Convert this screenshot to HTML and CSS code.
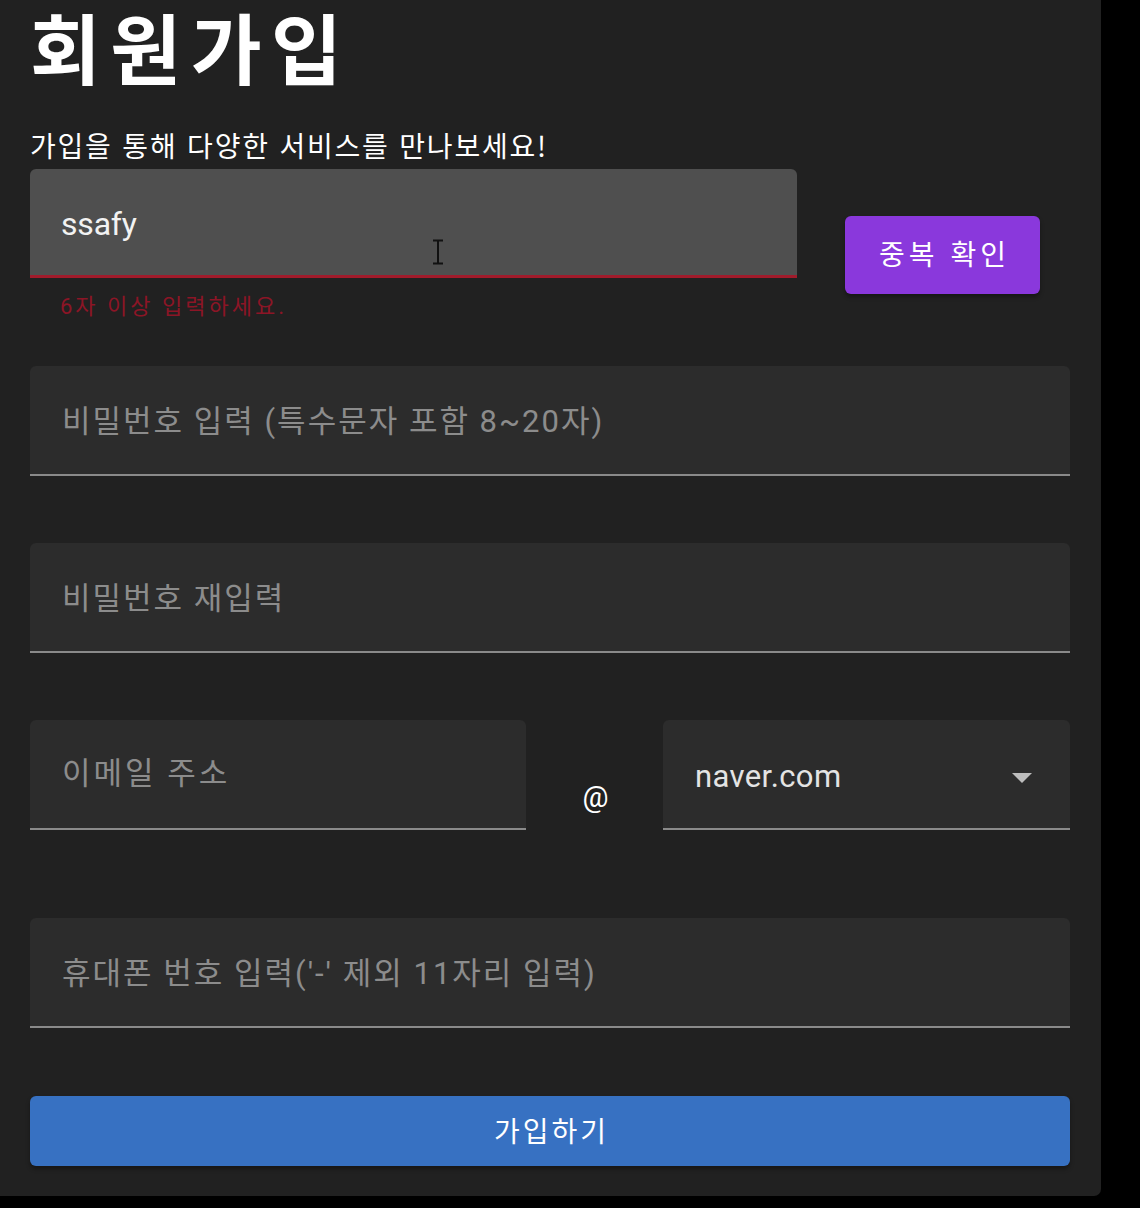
FILE: index.html
```html
<!DOCTYPE html>
<html lang="ko">
<head>
<meta charset="utf-8">
<title>회원가입</title>
<link rel="stylesheet" href="styles.css">
</head>
<body>
<main class="card">
  <h1 class="title">회원가입</h1>
  <p class="subtitle">가입을 통해 다양한 서비스를 만나보세요!</p>

  <div class="row row-id">
    <div class="group group-id">
      <div class="field field-focus field-error">
        <span class="value">ssafy</span>
        <svg class="cursor" width="12" height="26" viewBox="0 0 12 26"><path d="M6 2v22" stroke="#111" stroke-width="2" fill="none"/><path d="M1 1.5h10M1 24.5h10" stroke="#111" stroke-width="2"/></svg>
      </div>
      <div class="details error">6자 이상 입력하세요.</div>
    </div>
    <button class="btn btn-check">중복 확인</button>
  </div>

  <div class="group group-full">
    <div class="field"><span class="placeholder">비밀번호 입력 (특수문자 포함 8~20자)</span></div>
  </div>

  <div class="group group-full">
    <div class="field"><span class="placeholder">비밀번호 재입력</span></div>
  </div>

  <div class="row row-email">
    <div class="group group-email">
      <div class="field"><span class="placeholder placeholder-email">이메일 주소</span></div>
    </div>
    <div class="at">@</div>
    <div class="group group-domain">
      <div class="field field-select">
        <span class="select-value">naver.com</span>
        <svg class="arrow" width="20" height="10" viewBox="0 0 20 10"><path d="M0 0h20L10 10z" fill="#bdbdbd"/></svg>
      </div>
    </div>
  </div>

  <div class="group group-full group-phone">
    <div class="field"><span class="placeholder">휴대폰 번호 입력('-' 제외 11자리 입력)</span></div>
  </div>

  <button class="btn btn-submit">가입하기</button>
</main>
</body>
</html>
```

FILE: styles.css
```css
* { box-sizing: border-box; }

html, body {
  margin: 0;
  padding: 0;
  background: #000;
}

body {
  width: 1140px;
  height: 1208px;
  overflow: hidden;
  font-family: Roboto, "Noto Sans CJK KR", sans-serif;
}

.card {
  width: 1101px;
  height: 1196px;
  background: #212121;
  border-bottom-right-radius: 7px;
  padding: 0 31px 0 30px;
  display: flex;
  flex-direction: column;
}

.title {
  margin: 0;
  height: 98px;
  padding: 0;
  font-family: "Noto Sans CJK KR", sans-serif;
  font-size: 77px;
  line-height: 92px;
  font-weight: 700;
  color: #fff;
  letter-spacing: 9.5px;
}

.subtitle {
  margin: 0;
  height: 71px;
  padding-top: 32px;
  font-family: "Noto Sans CJK KR", sans-serif;
  font-size: 28px;
  line-height: 30px;
  font-weight: 400;
  color: #fff;
  letter-spacing: 1.8px;
}

.row {
  display: flex;
}

.row-id {
  align-items: center;
  margin-bottom: 25px;
}

.group-id {
  width: 767px;
}

.field {
  position: relative;
  height: 110px;
  background: #2c2c2c;
  border-radius: 6px 6px 0 0;
  border-bottom: 2px solid #8a8a8a;
  display: flex;
  align-items: center;
  padding-left: 32px;
  padding-bottom: 4px;
}

.field-focus {
  background: #4f4f4f;
  height: 109px;
  padding-left: 31px;
  padding-bottom: 0;
}

.field-error {
  border-bottom: 3px solid #a11b2b;
}

.value {
  font-family: Roboto, sans-serif;
  font-size: 32px;
  color: #f2f2f2;
  letter-spacing: -0.2px;
  margin-top: 4px;
}

.cursor {
  position: absolute;
  left: 402px;
  top: 70px;
}

.details {
  height: 63px;
  padding: 16px 0 0 30px;
  font-size: 22px;
  line-height: 26px;
}

.error {
  color: #8c1526;
  font-family: Roboto, "Noto Sans CJK KR", sans-serif;
  letter-spacing: 3px;
}

.btn {
  border: none;
  font-family: "Noto Sans CJK KR", sans-serif;
  color: #fff;
  cursor: pointer;
  border-radius: 6px;
  box-shadow: 0 3px 4px rgba(0, 0, 0, 0.35);
}

.btn-check {
  margin-left: 48px;
  width: 195px;
  height: 78px;
  background: #8a38dc;
  font-size: 28px;
  letter-spacing: 4px;
  padding: 0 0 4px 4px;
}

.placeholder {
  font-family: Roboto, "Noto Sans CJK KR", sans-serif;
  font-size: 31px;
  color: #8c8c8c;
  letter-spacing: 2px;
}

.group-full {
  margin-bottom: 67px;
}

.group-phone {
  margin-bottom: 68px;
}

.row-email {
  margin-bottom: 88px;
}

.group-email {
  width: 496px;
}

.placeholder-email {
  padding-bottom: 3px;
  letter-spacing: 3px;
}

.at {
  width: 137px;
  text-align: center;
  padding-top: 60px;
  font-family: Roboto, sans-serif;
  font-size: 29px;
  color: #fff;
  padding-left: 2px;
}

.group-domain {
  width: 407px;
}

.field-select {
  justify-content: space-between;
  padding-right: 38px;
  padding-bottom: 0;
}

.select-value {
  font-family: Roboto, sans-serif;
  font-size: 31px;
  color: #e4e4e4;
  letter-spacing: 0.4px;
  margin-top: 4px;
}

.arrow {
  margin-top: 8px;
}

.btn-submit {
  width: 1040px;
  height: 70px;
  background: #3771c2;
  font-size: 28px;
  letter-spacing: 3px;
  padding: 0 0 2px 3px;
}
```
